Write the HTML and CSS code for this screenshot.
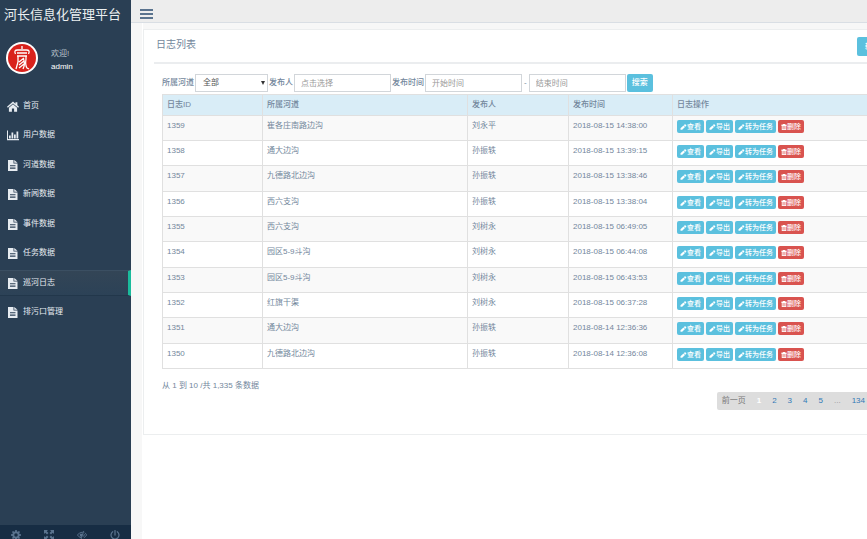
FILE: index.html
```html
<!DOCTYPE html>
<html lang="zh-CN">
<head>
<meta charset="utf-8">
<title>河长信息化管理平台</title>
<link rel="stylesheet" href="styles.css">
</head>
<body>
<svg class="sprite" aria-hidden="true">
  <symbol id="home" viewBox="0 0 22 20"><path d="M11 1 0 10.500l1.500 2L11 4.500l9.500 8 1.500-2-3-2.700V2h-3.500v3zM11 6 3.500 12.300V19.500H9v-6h4v6h5.500v-7.200z"/></symbol>
  <symbol id="chart" viewBox="0 0 24 20"><path d="M0 0h2v17h22v2.500H0zM4 10h3.500v6H4zM9 4h3.500v12H9zM14 8h3.500v8H14zM19 2h3.500v14H19z"/></symbol>
  <symbol id="file" viewBox="0 0 20 22"><path fill-rule="evenodd" d="M0 0h11v7h8v15H0zM12.500 0 19 5.500h-6.500zM4 10v1.500h11V10zm0 3.300v1.500h11v-1.500zM4 16.600v1.500h11v-1.500z"/></symbol>
  <symbol id="pencil" viewBox="0 0 16 16"><path d="m12 0 4 4-3 3-4-4zM8 4l4 4-7.500 7.500H0V11z"/></symbol>
  <symbol id="trash" viewBox="0 0 16 16"><path fill-rule="evenodd" d="M5 0h6l1 2h4v2h-2v12H2V4H0V2h4zM4.500 5v9H6V5zm3 0v9h1V5zM10 5v9h1.500V5z"/></symbol>
  <symbol id="gear" viewBox="0 0 20 20"><path fill-rule="evenodd" d="M8.500 0h3l.5 3 1.500.6L16 2l2 2-1.600 2.500L17 8l3 .5v3l-3 .5-.6 1.500L18 16l-2 2-2.500-1.600-1.500.6-.5 3h-3L8 17l-1.500-.6L4 18l-2-2 1.600-2.500L3 12l-3-.5v-3L3 8l.6-1.500L2 4l2-2 2.500 1.600L8 3zM10 6.500a3.500 3.500 0 1 0 0 7 3.500 3.500 0 0 0 0-7z"/></symbol>
  <symbol id="expand" viewBox="0 0 20 20"><path d="M0 0h8L5.500 2.500 9 6 6 9 2.500 5.500 0 8zM20 0v8l-2.500-2.500L14 9l-3-3 3.500-3.500L12 0zM0 20v-8l2.500 2.500L6 11l3 3-3.500 3.500L8 20zM20 20h-8l2.500-2.500L11 14l3-3 3.500 3.500L20 12z"/></symbol>
  <symbol id="eye" viewBox="0 0 22 20"><path fill="none" stroke="currentColor" stroke-width="2" d="M9 16Q4 15 1 10q4-6 10-6h2M17 5q3 2 4 5-2 4-6 6M15 1 9 19M16 8q1 4-3 5"/><path d="M6 7h7l-3 8q-5-2-4-8z"/></symbol>
  <symbol id="power" viewBox="0 0 20 20"><path fill="none" stroke="currentColor" stroke-width="2.500" stroke-linecap="round" d="M10 1v9M5.500 3.500a8 8 0 1 0 9 0"/></symbol>
</svg>
<div class="layout">
  <aside class="sidebar">
    <h1 class="brand">河长信息化管理平台</h1>
    <div class="profile">
      <svg class="avatar" viewBox="0 0 32 32" aria-hidden="true">
        <circle cx="16" cy="16" r="16" fill="#fff"/><circle cx="16" cy="16" r="14" fill="#d9221c"/>
        <path fill="none" stroke="#fff" stroke-width="1.300" d="M16 4v3M9.500 12q-2-4 2-4h9q4 0 2 4M11 11h10M11 14h10M12 14v6l-2 7M20 14v3M18 16l-5 4M18 19l-5 4M18 22l-5 4M17 16q3 5 0 11M20 17q-1 6 1 9l2 1"/>
      </svg>
      <div class="who"><span class="welcome">欢迎!</span><span class="name">admin</span></div>
    </div>
    <nav class="menu">
      <a href="#"><svg><use href="#home"/></svg>首页</a>
      <a href="#"><svg><use href="#chart"/></svg>用户数据</a>
      <a href="#"><svg><use href="#file"/></svg>河道数据</a>
      <a href="#"><svg><use href="#file"/></svg>新闻数据</a>
      <a href="#"><svg><use href="#file"/></svg>事件数据</a>
      <a href="#"><svg><use href="#file"/></svg>任务数据</a>
      <a href="#" class="active" aria-current="page"><svg><use href="#file"/></svg>巡河日志</a>
      <a href="#"><svg><use href="#file"/></svg>排污口管理</a>
    </nav>
    <div class="tools">
      <button type="button" aria-label="设置"><svg><use href="#gear"/></svg></button>
      <button type="button" aria-label="全屏"><svg><use href="#expand"/></svg></button>
      <button type="button" aria-label="锁定"><svg><use href="#eye"/></svg></button>
      <button type="button" aria-label="退出"><svg><use href="#power"/></svg></button>
    </div>
  </aside>
  <div class="page">
    <header class="topbar"><button type="button" class="toggle" aria-label="菜单"><i></i><i></i><i></i></button></header>
    <main class="content">
      <section class="panel">
        <div class="panel-head"><h2>日志列表</h2><button type="button" class="btn add">新增日志</button></div>
        <form class="filters">
          <label for="river">所属河道</label>
          <div class="select"><select id="river"><option>全部</option></select></div>
          <label for="author">发布人</label>
          <input id="author" type="text" placeholder="点击选择">
          <label for="from">发布时间</label>
          <input id="from" type="text" placeholder="开始时间">
          <span class="dash">-</span>
          <input type="text" placeholder="结束时间" aria-label="结束时间">
          <button type="button" class="btn search">搜索</button>
        </form>
        <table>
          <colgroup><col class="c-id"><col class="c-river"><col class="c-author"><col class="c-time"><col></colgroup>
          <thead><tr><th>日志ID</th><th>所属河道</th><th>发布人</th><th>发布时间</th><th>日志操作</th></tr></thead>
          <tbody id="rows"></tbody>
        </table>
        <p class="info">从 1 到 10 /共 1,335 条数据</p>
        <div class="pager-row"><nav class="pager" aria-label="分页"><span>前一页</span><b>1</b><a href="#">2</a><a href="#">3</a><a href="#">4</a><a href="#">5</a><span class="dots">...</span><a href="#">134</a><a href="#">后一页</a></nav></div>
      </section>
    </main>
  </div>
</div>
<script src="app.js"></script>
</body>
</html>
```
FILE: styles.css
```css
* { box-sizing: border-box; }
body {
  margin: 0;
  overflow: hidden;
  font: 8px/12px "Liberation Sans", "Noto Sans CJK SC", sans-serif;
  color: #73879c;
  background: #fff;
}
button, input, select { font: inherit; margin: 0; }
button { border: 0; cursor: pointer; }
a { text-decoration: none; }
h1, h2, p { margin: 0; font-weight: 400; }
svg { fill: currentColor; }
.sprite { display: none; }

.layout { display: flex; height: 100vh; }
.sidebar {
  flex: 0 0 131px;
  display: flex;
  flex-direction: column;
  background: #2a3f54;
  color: #ecf0f1;
}
.brand { padding: 5px 4px; font-size: 13px; line-height: 20px; white-space: nowrap; }
.profile { display: flex; gap: 13px; padding: 12px 6px; }
.avatar { width: 32px; height: 32px; }
.who { display: flex; flex-direction: column; padding-top: 5px; line-height: 13px; }
.welcome { color: #bac4ce; }
.name { color: #fff; }
.menu { display: flex; flex-direction: column; gap: 3px; padding-top: 7px; }
.menu a {
  display: flex;
  align-items: center;
  gap: 4px;
  height: 26px;
  padding-left: 7px;
  color: #e7ecf1;
}
.menu a:nth-child(even) { margin-bottom: 1px; }
.menu svg { width: 12px; height: 11px; }
.menu a.active {
  background: linear-gradient(#334556, #2c4257);
  border-top: 1px solid #3b4f62;
  border-bottom: 1px solid #22374b;
  border-right: 3px solid #1abb9c;
}
.tools {
  display: flex;
  height: 14px;
  margin-top: auto;
  overflow: hidden;
  background: #172d44;
}
.tools button { flex: 1; height: 20px; padding: 0; background: none; color: #5a738e; }
.tools svg { display: block; width: 10px; height: 10px; margin: 0 auto; }

.page { flex: 1; min-width: 0; display: flex; flex-direction: column; }
.topbar { height: 23px; padding: 9px 9px 0; background: #ededed; border-bottom: 1px solid #d9dee4; }
.toggle { display: flex; flex-direction: column; gap: 2px; width: 13px; padding: 0; background: none; }
.toggle i { width: 13px; height: 2px; background: #5a738e; }
.content {
  flex: 1;
  padding: 6px 0 0 12px;
  background: linear-gradient(90deg, #f7f7f7 11px, transparent 11px);
}
.panel {
  margin-right: -57px;
  padding: 7px 10px 24px;
  background: #fff;
  border: 1px solid #eceeef;
  box-shadow: 0 -6px #f7f7f7;
}
.panel-head {
  display: flex;
  justify-content: space-between;
  height: 27px;
  padding: 0 8px 0 2px;
  border-bottom: 2px solid #ebedef;
}
.panel-head h2 { font-size: 10px; line-height: 15px; }
.btn { padding: 0 5px; border-radius: 2px; background: #5bc0de; color: #fff; font-weight: 500; white-space: nowrap; }
.add { height: 19px; padding: 0 8px; }
.filters { display: flex; align-items: center; gap: 1px; padding: 10px 8px 2px; }
.filters label { font-weight: 500; }
.filters input, .filters select {
  width: 97px;
  height: 18px;
  padding: 0 6px;
  border: 1px solid #d2d6da;
  border-radius: 0;
  background: #fff;
  color: #555;
}
.filters select { width: 73px; appearance: none; display: block; padding-left: 7px; }
.select { position: relative; }
.select::after {
  content: "";
  position: absolute;
  right: 3px;
  top: 7px;
  border: 2px solid transparent;
  border-top: 4px solid #333;
  border-bottom: 0;
}
::placeholder { color: #999; opacity: 1; }
.dash { padding: 0 1px; }
.search { height: 18px; }

table { width: calc(100% - 16px); margin: 0 8px; border-collapse: collapse; table-layout: fixed; }
.c-id { width: 100px; }
.c-river { width: 205px; }
.c-author { width: 101px; }
.c-time { width: 104px; }
th, td { padding: 4px; text-align: left; vertical-align: top; border: 1px solid #e0e0e0; }
th { height: 21px; background: #d9edf7; font-weight: 500; }
td { height: 25px; }
tbody tr:nth-child(3n) td { height: 26px; }
tbody tr:nth-child(odd) { background: #f9f9f9; }
.actions { display: flex; gap: 2px; }
.act {
  display: flex;
  align-items: center;
  height: 13px;
  padding: 0 3px;
  border-radius: 2px;
  background: #5bc0de;
  color: #fff;
  font-size: 7px;
  font-weight: 500;
  line-height: 13px;
  white-space: nowrap;
}
.act svg { width: 7px; height: 6px; }
.act.del { background: #d9534f; }
.act.del svg { width: 6px; }

.info { padding: 11px 8px 0; }
.pager-row { display: flex; justify-content: flex-end; padding: 0 8px; }
.pager { display: flex; gap: 1px; padding: 3px 0; border-radius: 2px; background: #ddd; color: #777; }
.pager > * { padding: 0 5px; }
.pager a { color: #337ab7; }
.pager b { color: #fff; }
.pager .dots { color: #999; }
```
FILE: app.js
```js
const logs = [
  [1359, "崔各庄南路边沟", "刘永平", "2018-08-15 14:38:00"],
  [1358, "通大边沟", "孙振轶", "2018-08-15 13:39:15"],
  [1357, "九德路北边沟", "孙振轶", "2018-08-15 13:38:46"],
  [1356, "西六支沟", "孙振轶", "2018-08-15 13:38:04"],
  [1355, "西六支沟", "刘树永", "2018-08-15 06:49:05"],
  [1354, "园区5-9斗沟", "刘树永", "2018-08-15 06:44:08"],
  [1353, "园区5-9斗沟", "刘树永", "2018-08-15 06:43:53"],
  [1352, "红旗干渠", "刘树永", "2018-08-15 06:37:28"],
  [1351, "通大边沟", "孙振轶", "2018-08-14 12:36:36"],
  [1350, "九德路北边沟", "孙振轶", "2018-08-14 12:36:08"]
];
const action = (icon, text, kind = "") =>
  `<button type="button" class="act ${kind}"><svg><use href="#${icon}"/></svg>${text}</button>`;
const actions = action("pencil", "查看") + action("pencil", "导出") +
  action("pencil", "转为任务") + action("trash", "删除", "del");
document.getElementById("rows").innerHTML = logs.map(row =>
  `<tr>${row.map(v => `<td>${v}</td>`).join("")}<td><div class="actions">${actions}</div></td></tr>`).join("");
```
